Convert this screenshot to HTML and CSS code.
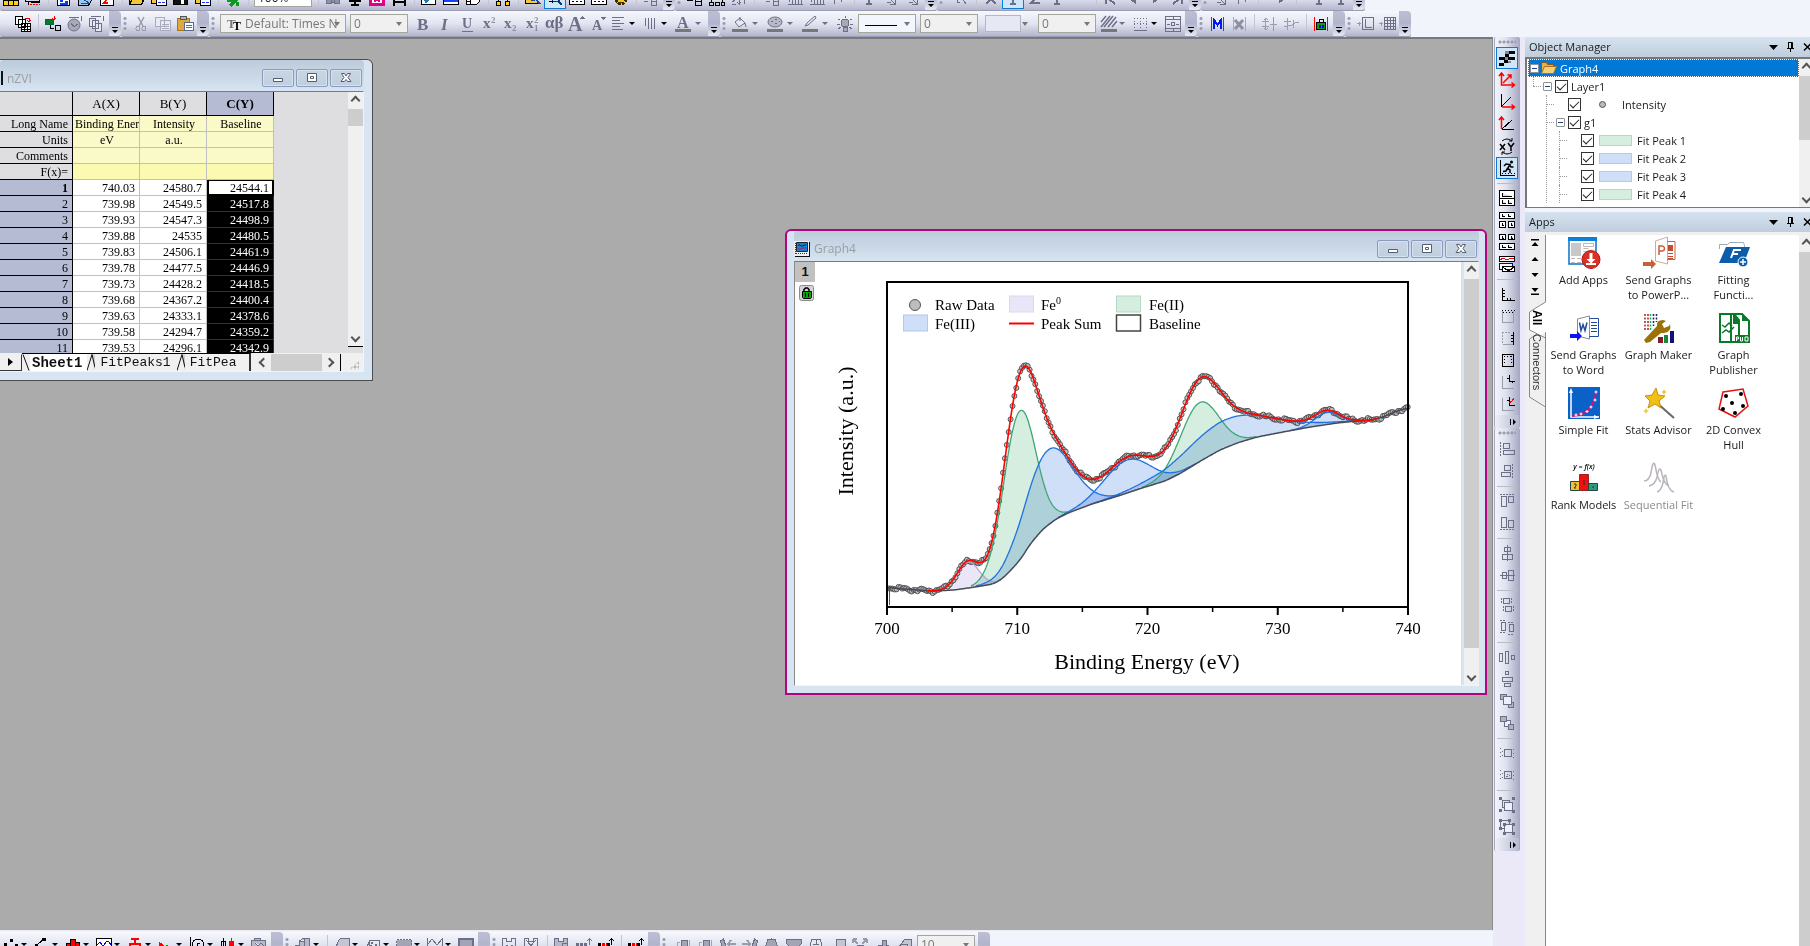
FILE: index.html
```html
<!DOCTYPE html>
<html lang="en">
<head>
<meta charset="utf-8">
<title>Graph4</title>
<link rel="stylesheet" href="styles.css">
</head>
<body>
<div class="app">
  <header class="bars">
    <div class="bar-row bar-row-first" id="bar-standard"></div>
    <div class="bar-row" id="bar-format"></div>
  </header>
  <div class="body">
    <div class="left">
      <main class="workspace">
        <section class="win win-book" aria-label="nZVI">
          <div class="titlebar">
            <span class="book-icon"></span>
            <span class="title">nZVI</span>
            <span class="win-buttons"></span>
          </div>
          <div class="client book-client">
            <div class="sheet-area">
              <div class="sheet-clip">
                <table class="sheet">
                  <thead><tr><th></th><th>A(X)</th><th>B(Y)</th><th class="picked">C(Y)</th></tr></thead>
                  <tbody id="sheet-body"></tbody>
                </table>
              </div>
              <div class="scroll scroll-book"><button class="sb up" aria-label="Scroll up"></button><span class="thumb"></span><button class="sb down" aria-label="Scroll down"></button></div>
            </div>
            <div class="tabs">
              <button class="tab-step" aria-label="Next sheet"></button>
              <div class="tab-list">
                <svg class="slash" viewBox="0 0 8 16"><path d="M1 0l6 16"/></svg><button class="tab tab-on">Sheet1</button><svg class="slash" viewBox="0 0 8 16"><path class="shade" d="M4 0l4 0 0 16z"/><path d="M0 16L5 0l3 13"/></svg><button class="tab">FitPeaks1</button><svg class="slash" viewBox="0 0 8 16"><path class="shade" d="M4 0l4 0 0 16z"/><path d="M0 16L5 0l3 13"/></svg><button class="tab">FitPea</button>
              </div>
              <div class="hscroll"><button class="sb prev" aria-label="Scroll left"></button><span class="thumb"></span><button class="sb next" aria-label="Scroll right"></button></div>
              <span class="grip-corner"></span>
            </div>
          </div>
        </section>

        <section class="win win-graph" aria-label="Graph4">
          <div class="titlebar">
            <svg class="graph-icon" viewBox="0 0 16 16"><path fill="#111" d="M1 1h15v15H1z"/><path fill="#eee" d="M0 0h15v15H0z"/><path fill="#0a84e0" stroke="#222" d="M2.500 1.500h11v9h-11z"/><path fill="none" stroke="#023" d="M4 4h2l1 1h2l1-1h2"/><path fill="none" stroke="#d11" d="M4 8h3l1-1h4"/><path stroke="#333" stroke-dasharray="1 1" d="M2 12.500h11M1.500 2v11"/></svg>
            <span class="title">Graph4</span>
            <span class="win-buttons"></span>
          </div>
          <div class="client graph-client">
            <div class="page">
              <svg class="chart" id="chart" viewBox="0 0 666 422" role="img" aria-label="Intensity against binding energy"></svg>
              <button class="layer">1</button>
              <svg class="lock" viewBox="0 0 16 16"><rect x=".5" y=".5" width="14" height="15" rx="2" fill="#d6d4d4" stroke="#8a8a8a"/><path fill="none" stroke="#000" stroke-width="1.500" d="M5 7V4.500L6.500 3h2L10 4.500V7"/><path fill="#0a0" stroke="#000" d="M3.500 6.500h9v6l-1 1h-7l-1-1z"/><path stroke="#000" d="M6.500 8v4M9.500 8v4"/></svg>
            </div>
            <div class="scroll scroll-graph"><button class="sb up" aria-label="Scroll up"></button><span class="thumb"></span><button class="sb down" aria-label="Scroll down"></button></div>
          </div>
        </section>
      </main>
      <footer class="bottom"><div class="bar-row" id="bar-plot"></div></footer>
    </div>

    <nav class="vbars" id="vbars" aria-label="Graph tools"></nav>

    <aside class="dock">
      <section class="panel">
        <h2 class="panel-head">Object Manager<span class="panel-tools"></span></h2>
        <div class="tree-box">
          <ul class="tree">
            <li><div class="row row-on"><span class="exp"></span><svg class="folder" viewBox="0 0 16 14"><path fill="#e8b04a" stroke="#8a5a14" d="M.5 12.500v-11h5l1 2h6v3"/><path fill="#f6cf7a" stroke="#a87320" d="M.5 12.500l3-7h12l-3 7z"/></svg><span>Graph4</span></div>
              <ul>
                <li class="tree-end"><div class="row"><span class="exp"></span><label><input type="checkbox" checked>Layer1</label></div>
                  <ul>
                    <li><div class="row leaf"><label><input type="checkbox" checked><i class="dot"></i>Intensity</label></div></li>
                    <li><div class="row"><span class="exp"></span><label><input type="checkbox" checked>g1</label></div>
                      <ul>
                        <li><div class="row leaf"><label><input type="checkbox" checked><i class="sw green"></i>Fit Peak 1</label></div></li>
                        <li><div class="row leaf"><label><input type="checkbox" checked><i class="sw blue"></i>Fit Peak 2</label></div></li>
                        <li><div class="row leaf"><label><input type="checkbox" checked><i class="sw blue"></i>Fit Peak 3</label></div></li>
                        <li><div class="row leaf"><label><input type="checkbox" checked><i class="sw green"></i>Fit Peak 4</label></div></li>
                      </ul>
                    </li>
                  </ul>
                </li>
              </ul>
            </li>
          </ul>
          <div class="scroll scroll-tree"><button class="sb up" aria-label="Scroll up"></button><span class="thumb"></span><button class="sb down" aria-label="Scroll down"></button></div>
        </div>
      </section>
      <section class="panel panel-apps">
        <h2 class="panel-head">Apps<span class="panel-tools"></span></h2>
        <div class="apps-box">
          <div class="side">
            <button class="step" aria-label="First"><svg viewBox="0 0 8 8"><path d="M0 0h8v1.500H0zM4 3l3.500 4h-7z"/></svg></button>
            <button class="step" aria-label="Previous"><svg viewBox="0 0 8 8"><path d="M4 2l3.500 4h-7z"/></svg></button>
            <button class="step" aria-label="Next"><svg viewBox="0 0 8 8"><path d="M4 6L.5 2h7z"/></svg></button>
            <button class="step" aria-label="Last"><svg viewBox="0 0 8 8"><path d="M0 6.500h8V8H0zM4 5L.5 1h7z"/></svg></button>
            <div class="side-tabs">
              <svg class="side-line" viewBox="0 0 18 112"><path fill="#fff" d="M18 3L1 13v18l8 7 9-5z"/><path fill="none" stroke="#888" d="M17.500 0v3L1.500 13v18l16 8M9 35l-7.500 5v58l16 10v4"/></svg>
              <button class="vtab vtab-on">All</button>
              <button class="vtab">Connectors</button>
            </div>
          </div>
          <div class="apps">
            <button class="appitem"><svg viewBox="0 0 32 32"><path fill="#fff" stroke="#0a70c8" stroke-width="1.500" d="M1 1h27v26H1z"/><path fill="#0a80d8" d="M0 0h29v4H0z"/><path fill="#c8c8c8" d="M3 6h10v13H3z"/><path fill="none" stroke="#bbb" d="M15.500 6.500h10v3h-10zM15.500 11.500h5M3 21.500h4M9 21.500h4M3 25.500h4M9 25.500h4M15.500 14.500h10"/><circle cx="23" cy="22.500" r="9" fill="#d93025" stroke="#b01818"/><path fill="#fff" d="M21.500 16h3v6h3L23 26.500 18.500 22h3zM18 26h10v2H18z"/></svg><span>Add Apps</span></button>
            <button class="appitem"><svg viewBox="0 0 32 32"><path fill="#fff" stroke="#d9a892" d="M12.500 4l12-4v27l-12-3z"/><path fill="none" stroke="#c8603a" d="M24 4.500h8v18h-8"/><path fill="#c84a2a" d="M25 8h5v6h-5zM25 16h5v1h-5zM25 19h5v1h-5zM25 21h5v1h-5z"/><path fill="none" stroke="#c8603a" stroke-width="1.500" d="M16 18V9h3.500q2 .5 2 2.500t-2 2.500H16"/><path fill="#c8603a" d="M0 25h8v-3l5 5-5 5v-3H0z"/></svg><span>Send Graphs to PowerP...</span></button>
            <button class="appitem"><svg viewBox="0 0 32 32"><path fill="#fff" stroke="#9ab" d="M1.500 12V7.500h8l2-2h14l1 3v4"/><path fill="#0b5cab" d="M8 10h24l-6 16H1z"/><path fill="none" stroke="#fff" stroke-width="2" d="M13 21l3-8h7M15 17h5"/><circle cx="25" cy="25" r="5" fill="#0b5cab" stroke="#fff"/><path stroke="#fff" stroke-width="1.500" d="M22 25h6M25 22v6"/></svg><span>Fitting<br>Functi...</span></button>
            <button class="appitem"><svg viewBox="0 0 32 32"><path fill="#fff" stroke="#889" d="M9.500 7l12-3v23l-12-3z"/><path fill="none" stroke="#234a9a" d="M21.500 6.500h9v18h-9M23 10.500h6M23 13.500h6M23 16.500h6M23 19.500h6"/><path fill="none" stroke="#234a9a" stroke-width="1.500" d="M11.500 10.500l1.500 8 2-6 2 6 2-8"/><path fill="#0a12f0" d="M2 22h7v-3l5 5-5 5v-3H2z"/></svg><span>Send Graphs to Word</span></button>
            <button class="appitem"><svg viewBox="0 0 32 32"><g fill="none" stroke-width="1.500" stroke-dasharray="2 1.500"><path stroke="#a22" d="M2 2v16M5 2v16"/><path stroke="#2a6" d="M7.500 2v16"/><path stroke="#226" d="M10.500 2v12M13.500 2v8"/></g><path fill="#9a7208" d="M14 14q-1-6 6-6l3 1-4 3 2 4 5-2 1-2q2 8-6 9h-3L7 30l-4 1-2-3z"/><path fill="#8a1a2a" d="M15 25h5v6h-5z"/><path fill="#1a8a3a" d="M21 23h4v8h-4z"/><path fill="#10107a" d="M27 19h4v12h-4z"/></svg><span>Graph Maker</span></button>
            <button class="appitem"><svg viewBox="0 0 32 32"><path fill="#fff" stroke="#0a7a2a" stroke-width="2" d="M13 2h11l7 7v21H13zM2 2h14l5 6v22H2z"/><path fill="#0a7a2a" d="M15 1l7 8v3h-7zM24 1l7 8h-7zM17 23h15v8H17z"/><path fill="none" stroke="#0a7a2a" stroke-width="1.500" d="M4 13l3 2 4-4 3 3M4 21l4-3 3 2 5-5"/><path fill="none" stroke="#fff" d="M18.500 29v-4h2v2h-2M22.500 25v4h2v-4M27 25v4h3v-4z"/></svg><span>Graph Publisher</span></button>
            <button class="appitem"><svg viewBox="0 0 32 32"><path fill="#0a62c8" d="M0 0h32v32H0z"/><path fill="none" stroke="#fff" stroke-width="1.500" d="M3 5v25h28"/><path fill="#fff" d="M3 1l2 5H1zM31 30l-5-2v4z"/><path fill="none" stroke="#d0107a" stroke-width="2" d="M4 29q12-1 17-7 6-7 7-17"/><path stroke="#fff" d="M6.500 28h3M8 26.500v3M11.500 27h3M13 25.500v3M17.500 24.500h3M19 23v3M21.500 20h3M23 18.500v3M25.500 13h3M27 11.500v3M26.500 5h3M28 3.500v3"/></svg><span>Simple Fit</span></button>
            <button class="appitem"><svg viewBox="0 0 32 32"><path stroke="#666" stroke-width="2" d="M14 16l17 15"/><path fill="#f2c014" stroke="#c8900a" d="M13 1l2 7 7 1-6 5 2 7-6-4-7 4 2-7-5-5 7-1z"/><path fill="#f2c840" d="M21 2l1 2 2 1-2 1-1 2-1-2-2-1 2-1zM3 21l1 2 2 1-2 1-1 2-1-2-2-1 2-1z"/></svg><span>Stats Advisor</span></button>
            <button class="appitem"><svg viewBox="0 0 32 32"><path fill="#fff" stroke="#e81010" stroke-width="1.500" d="M5 5l20-3 5 17-13 11L1 22z"/><g><circle cx="8" cy="9" r="2"/><circle cx="23" cy="7" r="2"/><circle cx="14" cy="16" r="2"/><circle cx="5" cy="22" r="2"/><circle cx="25" cy="19" r="2"/><circle cx="17" cy="26" r="2"/></g></svg><span>2D Convex Hull</span></button>
            <button class="appitem"><svg viewBox="0 0 32 32"><text x="16" y="7" text-anchor="middle" font-family="Open Sans, sans-serif" font-size="7" font-style="italic" font-weight="600">y = f(x)</text><path fill="#f2c030" stroke="#244" d="M2.500 19.500h9v9h-9z"/><path fill="#f01010" stroke="#922" d="M11.500 12.500h9v16h-9z"/><path fill="#2f9a78" stroke="#244" d="M20.500 21.500h9v7h-9z"/><path fill="none" stroke="#333" d="M6 22h2v2l-2 2h2M16 18v5M24 25h2"/></svg><span>Rank Models</span></button>
            <button class="appitem faded"><svg viewBox="0 0 32 32"><g fill="none" stroke="#b9b4be" stroke-width="1.500"><path d="M1 19q5 0 7-8 2-14 4-8 3 16 6 17"/><path d="M6 24q6-1 8-9 2-11 4-7 3 15 8 16"/><path d="M14 30q4-1 6-9 1-10 3-7 2 15 8 16"/></g></svg><span>Sequential Fit</span></button>
          </div>
          <div class="scroll scroll-apps"><button class="sb up" aria-label="Scroll up"></button><span class="thumb"></span></div>
        </div>
      </section>
    </aside>
  </div>
</div>
<script src="script.js"></script>
</body>
</html>
```
FILE: styles.css
```css
* { box-sizing: border-box; }
body { margin: 0; background: #f1f4fb; color: #1b1b1b; font: 11px/15px "Open Sans", "Noto Sans", sans-serif; overflow: hidden; }
button, select { font: inherit; color: inherit; border: 0; padding: 0; margin: 0; background: none; border-radius: 0; }
.app { height: 100vh; display: flex; flex-direction: column; }

/* toolbars */
.bars { flex: none; overflow: hidden; height: 37px; }
.bar-row { display: flex; height: 26px; }
.bar-row-first { margin-top: -15px; }
.group { display: flex; flex: none; align-items: center; height: 26px; background: linear-gradient(#f6f8fd, #e2e5f1 50%, #b4b6cc); border-bottom: 1px solid #9a9cb4; border-radius: 2px; }
.grip { flex: none; width: 9px; height: 16px; background: radial-gradient(circle, #9a9cb0 1px, transparent 2px) 0 0 / 8px 5px; }
.tb { flex: none; width: 22px; height: 22px; display: flex; align-items: center; padding-left: 3px; color: #6d6f86; }
.tb-drop { width: 35px; }
.tb-tight { width: 32px; }
.tb-small { width: 31px; }
.tb-on { background: #cfe5f8; box-shadow: inset 0 0 0 1px #0f7ad6; }
.icon { flex: none; width: 16px; height: 16px; overflow: visible; fill: none; stroke: currentColor; shape-rendering: crispEdges; }
.icon text { fill: currentColor; stroke: none; font-family: "Liberation Serif", serif; font-weight: 700; }
.caret { flex: none; margin-left: 4px; border: 3px solid transparent; border-top: 3px solid currentColor; border-bottom: 0; }
.tb-tight .caret, .tb-small .caret { margin-left: 2px; }
.black { color: #000; }
.sep { flex: none; width: 8px; height: 20px; background: linear-gradient(#c3c5d2, #c3c5d2) center / 1px 100% no-repeat; }
.space { flex: none; width: 4px; }
.cap { flex: none; align-self: stretch; width: 12px; margin-left: 1px; border-radius: 0 4px 4px 0; background: linear-gradient(#bcbfd4, #b2b4cc 50%, #e6e8f2); display: flex; align-items: flex-end; justify-content: center; padding-bottom: 3px; }
.cap svg, .vcap svg { width: 6px; height: 6px; }
.combo { flex: none; position: relative; width: 58px; height: 19px; margin: 0 2px; border: 1px solid #a5a69b; background: #f0f0f0; display: flex; color: #777; }
.combo select { appearance: none; width: 100%; padding-left: 3px; font-size: 12px; line-height: 17px; color: #777; }
.combo::after { content: ""; position: absolute; right: 5px; top: 7px; border: 3px solid transparent; border-top: 4px solid #777; border-bottom: 0; }
.combo svg { position: absolute; left: 6px; top: 1px; }
.combo-font { width: 126px; }
.combo-font select { padding-left: 24px; }
.combo-zoom { background: #fff; }
.combo-zoom select { color: #222; }
.combo-line { background: #f3f6fc; }
.combo-pen { width: 50px; background: none; border-color: transparent; margin-left: 4px; }
.combo-pen select { border: 1px solid #b5b7c4; width: 36px; background: #e6e9f3; }
.bottom { flex: none; height: 16px; overflow: hidden; border-top: 1px solid #e9eaf2; background: #f1f4fb; }
.bottom .bar-row { margin-top: 1px; }

.body { flex: 1; min-height: 0; display: flex; }
.left { flex: 1; min-width: 0; display: flex; flex-direction: column; }
.workspace { flex: 1; position: relative; overflow: hidden; background: #ababab; border-top: 2px solid #777a7c; border-right: 1px solid #8c8c8c; }

.vbars { flex: none; width: 32px; padding: 0 5px 0 1px; background: #ebe9f8; overflow: hidden; }
.vgroup { width: 26px; display: flex; flex-direction: column; align-items: center; background: linear-gradient(90deg, #f3f5fc, #dfe2ef 45%, #a9abc4); border: 1px solid #a7a9c0; border-width: 0 1px; border-radius: 2px; }
.vgroup .grip { width: 18px; height: 10px; background: radial-gradient(circle, #9a9cb0 1px, transparent 2px) 0 1px / 4px 8px; }
.vgroup .sep { width: 20px; height: 8px; background: linear-gradient(#b9bbc6, #b9bbc6) center / 100% 1px no-repeat; }
.vcap { align-self: stretch; height: 13px; background: linear-gradient(90deg, #eef0f8, #b6b9cf); display: flex; align-items: center; justify-content: flex-end; padding-right: 3px; border-radius: 0 0 4px 4px; }

/* child windows */
.win { position: absolute; background: #d7e4f2; border: 1px solid #4d4d4d; border-radius: 6px 6px 0 0; display: flex; flex-direction: column; }
.win-book { left: 0; top: 20px; width: 373px; height: 322px; border-left: 0; border-top-left-radius: 0; padding: 0 8px 8px 0; }
.win-graph { left: 785px; top: 190px; width: 702px; height: 466px; border: 2px solid #b0057f; padding: 0 6px 7px 7px; }
.titlebar { flex: none; height: 31px; display: flex; align-items: center; padding: 5px 2px 0 0; background: linear-gradient(#bccbda, #d7e4f2); color: #9a9ea3; font-size: 12px; border-radius: 4px 4px 0 0; }
.win-graph .titlebar { height: 30px; }
.title { flex: 1; padding-left: 4px; }
.book-icon { width: 3px; height: 14px; background: #bfe3e8; border-right: 2px solid #111; }
.graph-icon { width: 16px; height: 16px; }
.win-buttons { display: flex; gap: 2px; }
.win-buttons button { width: 32px; height: 18px; border: 1px solid #8b9bbd; border-radius: 2px; background: linear-gradient(#c9d5e3, #bfcfdf); box-shadow: inset 0 0 0 1px #d7e2ee; display: grid; place-items: center; }
.win-buttons svg { width: 12px; height: 10px; }
.client { flex: 1; min-height: 0; border: 1px solid #858585; border-color: #7b7b7b #f4f4f4 #f4f4f4 #8b8b8b; }
.book-client { display: flex; flex-direction: column; border-left: 0; background: #dedee1; }
.sheet-area { flex: 1; min-height: 0; display: flex; }
.sheet-clip { flex: 1; overflow: hidden; }
.sheet { table-layout: fixed; width: 274px; border-collapse: separate; border-spacing: 0; font: 12px/14px "Liberation Serif", serif; color: #000; }
.sheet th, .sheet td { height: 16px; padding: 1px 4px 0; overflow: hidden; white-space: nowrap; text-align: right; font-weight: 400; border: 0 solid #c0c0c0; border-width: 0 1px 1px 0; width: 67px; }
.sheet thead th { height: 24px; font-size: 13px; text-align: center; background: #dedee1; border-color: #000; }
.sheet thead th.picked { background: #b5bbd3; font-weight: 700; }
.sheet th:first-child { width: 73px; border-color: #000; background: #dedee1; }
.sheet td { background: #fff; }
.sheet .meta td { background: #fafac8; text-align: center; padding: 1px 0 0 2px; }
.sheet .meta-last td { background: #fafab0; }
.sheet .data th { background: #b5bbd3; }
.sheet .data-first th { font-weight: 700; }
.sheet .data td:last-child { background: #000; color: #fff; border-color: #333; border-left: 2px solid #000; }
.sheet .data-first td:last-child { background: #fff; color: #000; border-color: #000; box-shadow: inset 0 1px #000, inset 0 -1px #000, inset -1px 0 #000; }

.scroll { flex: none; width: 15px; display: flex; flex-direction: column; background: #f0f0f0; }
.thumb { background: #cdcdcd; }
.sb { flex: none; width: 15px; height: 17px; display: grid; place-items: center; }
.sb::before { content: ""; width: 5px; height: 5px; border: 2px solid #555; border-width: 2px 0 0 2px; transform: rotate(45deg); }
.sb.down::before { transform: rotate(225deg); }
.sb.prev::before { transform: rotate(-45deg); }
.sb.next::before { transform: rotate(135deg); }
.sb.down { margin-top: auto; }
.scroll-book { border-bottom: 1px solid #000; height: calc(100% - 6px); }
.scroll-book .thumb { height: 17px; }
.tabs { flex: none; height: 18px; display: flex; align-items: center; background: #f0f0f0; font: 13px/16px "Liberation Mono", monospace; color: #111; }
.tab-step { flex: none; width: 22px; height: 17px; border: 1px solid #333; border-left: 0; border-top-color: #eee; display: grid; place-items: center; }
.tab-step::before { content: ""; border: 4px solid transparent; border-left: 5px solid #000; border-right: 0; }
.tab-list { width: 229px; height: 18px; flex: none; white-space: nowrap; display: flex; border-top: 1px solid #000; border-right: 2px solid #333; }
.tab { flex: none; padding: 0 6px 0 5px; }
.tab-on { background: #fff; font-size: 14px; font-weight: 700; padding: 0 5px 0 2px; }
.slash { flex: none; width: 8px; height: 17px; fill: none; stroke: #111; stroke-width: 1; }
.slash .shade { fill: #cfcfcf; stroke: none; }
.hscroll { width: 90px; height: 17px; display: flex; padding: 0 3px 0 5px; border-right: 1px solid #000; }
.hscroll .thumb { flex: 1; }
.grip-corner { flex: 1; height: 9px; background: radial-gradient(circle, #b5b5b5 1px, transparent 2px) 0 0 / 4px 4px; margin: 6px 4px 0 8px; clip-path: polygon(100% 0, 100% 100%, 0 100%); }
.graph-client { display: flex; }
.page { flex: 1; position: relative; background: #fff; border-right: 1px solid #ddd; margin-right: 2px; }
.chart { display: block; width: 666px; height: 422px; }
.chart text { font-family: "Liberation Serif", serif; fill: #000; }
.layer { position: absolute; left: 0; top: 0; width: 20px; height: 20px; background: #c3c0c0; font: 700 13px/20px "Liberation Sans", sans-serif; color: #111; }
.lock { position: absolute; left: 4px; top: 23px; width: 16px; height: 16px; }
.scroll-graph .thumb { height: 369px; }

/* docked panels */
.dock { flex: none; width: 285px; display: flex; flex-direction: column; gap: 4px; }
.panel { flex: none; display: flex; flex-direction: column; }
.panel-apps { flex: 1; min-height: 0; }
.panel-head { margin: 0; height: 20px; display: flex; justify-content: space-between; align-items: center; padding: 0 0 1px 4px; background: linear-gradient(#d6e2ee, #bfcddd); font-size: 11px; font-weight: 400; }
.panel-tools { width: 43px; display: flex; overflow: hidden; }
.panel-tools svg { flex: none; width: 45px; height: 12px; }
.tree-box { display: flex; height: 151px; border: 2px solid #777; border-width: 2px 0 1px 2px; background: #fff; padding-left: 1px; overflow: hidden; }
.tree { flex: 1; overflow: hidden; }
.tree, .tree ul { list-style: none; margin: 0; padding: 0; }
.tree ul { margin-left: 13px; }
.tree ul li { position: relative; }
.tree ul li::before { content: ""; position: absolute; left: -8px; top: 0; bottom: 0; border-left: 1px dotted #999; }
.tree ul .tree-end::before { bottom: auto; height: 9px; }
.tree ul li::after { content: ""; position: absolute; left: -8px; top: 9px; width: 8px; border-top: 1px dotted #999; }
.row { height: 18px; display: flex; align-items: center; gap: 3px; padding-left: 2px; white-space: nowrap; }
.row label { display: flex; align-items: center; gap: 3px; }
.leaf { padding-left: 14px; }
.row-on { background: #0078d7; color: #fff; outline: 1px dotted #fff; outline-offset: -1px; }
.exp { width: 9px; height: 9px; border: 1px solid #919191; background: linear-gradient(#22408a, #22408a) center / 5px 1px no-repeat #fff; border-radius: 1px; }
.folder { width: 16px; height: 14px; margin-left: -1px; }
input[type="checkbox"] { appearance: none; width: 13px; height: 13px; margin: 0; border: 1px solid #333; background: #fff; display: grid; place-items: center; }
input[type="checkbox"]::after { content: ""; width: 8px; height: 4px; margin-top: -2px; border: 1px solid #222; border-width: 0 0 1px 1px; transform: rotate(-45deg); }
.dot { width: 7px; height: 7px; margin: 0 13px 0 15px; border: 1px solid #555; border-radius: 50%; background: #bbb; }
.sw { width: 33px; height: 11px; margin: 0 2px; border: 1px solid #b4d9c5; }
.green { background: #d5eee0; }
.blue { background: #cfdff8; border-color: #b1caee; }
.scroll-tree .thumb { height: 64px; }
.scroll-tree, .scroll-apps { width: 11px; overflow: hidden; }
.apps-box { flex: 1; min-height: 0; display: flex; padding-top: 3px; background: #f0f0f0; }
.side { width: 20px; flex: none; display: flex; flex-direction: column; align-items: center; }
.step { width: 20px; height: 16px; display: grid; place-items: center; }
.step svg { width: 8px; height: 8px; }
.side-tabs { position: relative; width: 17px; display: flex; flex-direction: column; align-items: center; margin-left: 3px; padding-top: 11px; gap: 9px; }
.side-line { position: absolute; left: 0; top: 0; width: 18px; height: 112px; }
.vtab { position: relative; writing-mode: vertical-rl; font: 11px/13px "Liberation Sans", sans-serif; color: #333; }
.vtab-on { font-weight: 700; font-size: 12px; color: #000; }
.apps { flex: 1; display: grid; grid-template-columns: repeat(auto-fill, 75px); grid-auto-rows: 75px; justify-content: start; align-content: start; background: #fff; border-left: 1px solid #888; padding-top: 2px; overflow: hidden; }
.appitem { display: flex; flex-direction: column; align-items: center; gap: 3px; text-align: center; }
.appitem svg { width: 32px; height: 32px; overflow: visible; }
.appitem span { width: 77px; margin: 0 -1px; padding: 0 1px; }
.faded { color: #8b8b8b; }
.scroll-apps .thumb { flex: 1; }
```
FILE: script.js
```js
const G = {
  table: '<path fill="#f7d117" stroke="#000" d="M.5.5h15v15H.5zM.5 5.500h15M.5 10.500h15M5.500.5v15M10.500.5v15"/>',
  board: '<path stroke="#000" d="M.5 2.500h14v9H.5zM3.500 12v3M6 12.500h9"/><path stroke="#f00" stroke-dasharray="2 1" d="M5 14.500h10"/>',
  doc: '<path fill="#fff" stroke="#000" d="M2.500.5h12v15h-12z"/><path stroke="#0a3cf0" stroke-width="2" d="M5 4h7M5 11h3M10 12h3M5 14h8"/>',
  docB: '<path fill="#9cc8f0" stroke="#000" d="M1.500 1.500h13v9l-3 5h-10z"/><path stroke="#24a" d="M4 8l8 5M4 13h8"/>',
  docR: '<path fill="#fff" stroke="#000" d="M1.500.5h13v15h-13z"/><path stroke="#f00" stroke-width="2" d="M4 14l8-10M4 13h5"/>',
  folder: '<path fill="#f3c63c" stroke="#000" d="M.5 14.500v-9h6l1 2h6v3M.5 14.500l3-6h12l-3 6z"/>',
  docs: '<path fill="#f3c63c" stroke="#000" d="M.5.500h9v13h-9z"/><path fill="#fff" stroke="#000" d="M5.500 4.500h10v11h-10z"/><path stroke="#13f" stroke-dasharray="3 1" d="M7 12.500h7"/>',
  save: '<path fill="#111" stroke="#000" d="M.5.500h14v14H.5z"/><path fill="#f3c63c" d="M4 2h8v5H4z"/><path fill="#fff" stroke="none" d="M8 10h3v4H8z"/>',
  run: '<path stroke="#0a9a20" stroke-width="3" d="M2 10h5l2 2 4-3M9 12l-4 4M12 12v4"/>',
  bino: '<path fill="#8d93a8" d="M1.500 7.500h5v6h-5zM9.500 7.500h5v6h-5zM6.500 9.500h3v3h-3z"/>',
  tool: '<path stroke="#000" stroke-width="2" d="M2 11h12M8 4v11M4 15h8"/>',
  pink: '<path fill="#fff" stroke="#e0008a" stroke-width="3" d="M1.500 1.500h13v13h-13z"/><path stroke="#e0008a" stroke-width="2" d="M5 12l3-3 3 3"/>',
  film: '<path stroke="#000" stroke-width="2" d="M2.500 0v16M13.500 0v16M2 6h12M2 12h12"/>',
  pen: '<path fill="#fff" stroke="#000" d="M.5.500h14v14H.5z"/><path stroke="#27a" stroke-width="3" d="M4 12L13 4"/>',
  pane: '<path fill="#fff" stroke="#000" d="M.5.500h15v14H.5z"/><path stroke="#14f" stroke-width="4" d="M1 10h14"/>',
  box: '<path fill="#fff" stroke="#000" d="M1.500 2.500h13v9l-3 3h-10zM5 10v4M1 11h4"/>',
  tree: '<path fill="#f5d020" stroke="#000" d="M1.500 11.500h4v4h-4zM10.500 11.500h4v4h-4zM6 6.500h4v3H6zM3 11l3-3M13 11l-3-3"/>',
  findf: '<path fill="#f3c63c" stroke="#000" d="M.5 5.500h12v8H.5z"/><path stroke="#124a9a" stroke-width="2" d="M10 8l5 6M6 10h4"/>',
  find: '<path stroke="#000" d="M2 9h5M2 11.500h3M5 7v6"/><circle cx="9" cy="8" r="4" fill="#bfe8fa" stroke="#137"/><path stroke="#137" stroke-width="2" d="M11 11l4 4"/>',
  cmd: '<path fill="#fff" stroke="#000" d="M.5 2.500h15v12H.5z"/><path stroke="#000" stroke-dasharray="2 2" d="M3 11.500h10"/>',
  gear: '<circle cx="8" cy="9" r="5" fill="#f5c518" stroke="#3a2a00" stroke-dasharray="3 1" stroke-width="3"/>',
  colsG: '<path d="M1 5.500h4M1 8.500h4M1 11.500h4M8.500 2v13h5V2M8.500 7h5M8.500 11h5"/>',
  cols: '<path stroke="#000" d="M.5 4v6h5V4M8.500 2v13h6V2M8.500 7h6M8.500 11h6"/>',
  net: '<path stroke="#000" d="M8 4v5M2.500 12V9.500h11V12M.5 12.500h4v3h-4zM6.500 12.500h4v3h-4zM12.500 12.500h3v3h-3z"/>',
  sort: '<path d="M1 14h4M1 12l3-2M8 6v8l-2-2M8 14l2-2M13.500 8v6"/>',
  bars: '<path d="M.5 14.500h15M2.500 12V8M5.500 14V9M8.500 14V7M11.500 14V5M14 14V4"/>',
  tee: '<path d="M3.500 4v10M8 6h5M10.500 6v6"/>',
  arr: '<path d="M4 6l8 8M12 9v5H7M4 12h4"/>',
  letter: '<path stroke-width="2" d="M8 2v12M5 14h6"/>',
  lamb: '<path d="M4 4v8h3M9 4v4l4 6"/>',
  cross: '<path stroke-width="2" d="M8 4v5l-5 5M8 9l5 5"/>',
  zed: '<path stroke-width="2" d="M12 5l-8 8h9"/>',
  first: '<path stroke-width="2" d="M3 4v10M12 4L6 9l6 5"/>',
  left: '<path fill="currentColor" d="M10 5L5 9l5 4z"/>',
  right: '<path fill="currentColor" d="M6 5l5 4-5 4z"/>',
  last: '<path stroke-width="2" d="M13 4v10M4 4l6 5-6 5"/>',
  stack: '<path fill="#fff" stroke="#000" d="M.5.500h7v8h-7zM3.500 3.500h7v8h-7zM6.500 7.500h9v8h-9zM6.500 10.500h9M6.500 13h9M9.500 8v7M12.500 8v7"/><path stroke="#e00" d="M10 2.500h4V6M12 4l2 2 2-2"/>',
  link: '<path fill="#0a7a2a" stroke="#064" d="M.5 3.500h8v5h-8z"/><path stroke="#000" d="M5 9v3h4M10.500 9.500h5v5h-5z"/><path stroke="#e00" d="M9 0v4M7 2l2 2 2-2"/>',
  clock: '<circle cx="7" cy="9" r="6" fill="#a7a9b8" shape-rendering="auto"/><path d="M4 7l3 4 4-3M2 1h10M14.500 0v5"/>',
  sheets: '<path fill="#e8eaf3" d="M.5 2.500h6v8h-6zM3.500 4.500h6v8h-6zM6.500 7.500h6v8h-6zM2 .5h10M14.500 0v5"/>',
  cut: '<path stroke="#9a9cae" shape-rendering="auto" stroke-width="1.500" d="M5 1l5 9M11 1L6 10"/><circle cx="5" cy="12.500" r="2" stroke="#9a9cae"/><circle cx="11" cy="12.500" r="2" stroke="#9a9cae"/>',
  copy: '<path fill="#e7e9f3" stroke="#a9abbc" d="M.5 1.500h9v9h-9zM5.500 4.500h10v10h-10zM7 8h7M7 10.500h7M7 12.500h7"/>',
  paste: '<path fill="#e0a93e" stroke="#a8741a" d="M.5 2.500h12v12H.5z"/><path fill="#b5b5b5" stroke="#555" d="M3.500.5h6v3h-6z"/><path fill="#fff" stroke="#5a6a8a" d="M7.500 6.500h9v8h-9zM9 9h6M9 11.500h6"/>',
  B: '<text x="4" y="14" font-size="17">B</text>',
  I: '<text x="6" y="14" font-size="17" font-style="italic">I</text>',
  U: '<text x="5" y="12" font-size="14">U</text><path d="M5 15.500h11"/>',
  sup: '<text x="4" y="12" font-size="15">x</text><text x="12" y="7" font-size="9" opacity=".7">2</text>',
  sub: '<text x="3" y="12" font-size="15">x</text><text x="11" y="15" font-size="9" opacity=".7">2</text>',
  supsub: '<text x="3" y="12" font-size="15">x</text><text x="11" y="7" font-size="9" opacity=".7">2</text><text x="11" y="15" font-size="9" opacity=".7">1</text>',
  ab: '<text x="0" y="12" font-size="17">αβ</text>',
  Aup: '<text x="1" y="15" font-size="20">A</text><path fill="currentColor" d="M13.500 2.500l2-2 2 2z"/>',
  Adn: '<text x="3" y="14" font-size="14">A</text><path fill="currentColor" d="M12.500 1.500h4l-2 2z"/>',
  align: '<path d="M1 1.500h12M1 4.500h8M1 7.500h12M1 10.500h8M1 13.500h11"/>',
  vert: '<path d="M2.500 2v8M5.500 2v11M8.500 2v11M11.500 2v11"/>',
  Acol: '<text x="2" y="12" font-size="16">A</text><path stroke="#777" stroke-width="3" d="M0 14.500h16"/>',
  fill: '<path shape-rendering="auto" fill="#e7e9f3" d="M3 6l5-4 5 5-6 4zM8 5V1M13 7l1 4"/><path stroke="#777" stroke-width="3" d="M0 14.500h16"/>',
  pal: '<ellipse shape-rendering="auto" cx="8" cy="6" rx="7" ry="5" fill="#b7b9c8"/><path d="M4 5h2M8 3h2M8 7h2M12 5h1"/><path stroke="#777" stroke-width="3" d="M0 14.500h16"/>',
  pencil: '<path shape-rendering="auto" fill="#e7e9f3" d="M3 10l2-3 8-7 1 2-8 7z"/><path stroke="#777" stroke-width="3" d="M0 14.500h16"/>',
  bulb: '<circle cx="8" cy="7" r="4" fill="#a7a9b8"/><path fill="#a7a9b8" d="M6 11h4v4H6zM8 0v2M1 3l2 1M15 3l-2 1M0 8h3M13 8h3M1 13l3-2M15 13l-3-2"/>',
  hatch: '<path shape-rendering="auto" stroke-width="1.500" d="M0 6l5-6M0 11L9 0M3 11l9-11M7 11l8-10M11 11l5-6"/><path stroke="#777" stroke-width="3" d="M0 14.500h16"/>',
  dots: '<path stroke-dasharray="1 2" d="M1 2.500h13M1 7.500h13M1.500 2v11M7.500 2v11M13.500 2v11"/><path d="M1 14.500h13"/>',
  grid3: '<path d="M.5.500h15v15H.5zM.5 3.500h15M.5 12.500h15M8 0v4M8 12v4M2 8h3M11 8h3M6.500 6.500h3v3h-3z"/>',
  Mm: '<path stroke="#f00" d="M2.500 1v14M14.500 1v14"/><path stroke="#0018e8" stroke-width="2" d="M5 13V4l3.500 5L12 4v9"/>',
  Xm: '<path stroke="#a7a9b8" d="M2.500 1v14M14.500 1v14"/><path stroke="#8d8fa2" shape-rendering="auto" stroke-width="3" d="M4 4l8 9M12 4l-8 9"/>',
  al1: '<path stroke="#9a9cae" d="M4.500 2v12M12.500 1v14M1 5.500h7M1 10.500h7M9 8.500h7M3 4l2-2 2 2M3 12l2 2 2-2"/>',
  al2: '<path stroke="#9a9cae" d="M4.500 2v12M1 5.500h7M1 11l4-1 4-1 3-2 4-1M10.500 4v8"/>',
  lk: '<path stroke="#f00" d="M1.500 1v14M14.500 1v14"/><path stroke="#000" d="M6.500 6V3.500h4V6"/><path fill="#0a9a20" stroke="#000" d="M3.500 6.500h9v7h-9z"/><path stroke="#00f" stroke-width="2" d="M6.500 9v3M9.500 9v3"/>',
  addL: '<path stroke="#9a9cae" d="M0 7.500h4M2 5.500v4"/><path d="M5.500 1.500h11v12h-11zM8.500 3v8H15"/>',
  addG: '<path stroke="#9a9cae" d="M0 7.500h4M2 5.500v4"/><path d="M5.500 1.500h11v12h-11zM5.500 4.500h11M5.500 7.500h11M5.500 10.500h11M8.500 1v12M11.500 1v12M14.500 1v12"/>',
  pts: '<path stroke="#000" stroke-width="3" d="M1 7h3M7 3h3M12 8h3"/>',
  ln: '<path stroke="#000" d="M3 8l7-6"/><path stroke="#000" stroke-width="3" d="M1 8h3M8 2.500h4"/>',
  colr: '<path fill="#f00" stroke="#000" d="M1.500 6.500h4v9h-4zM5.500 2.500h5v13h-5zM10.500 5.500h4v10h-4z"/>',
  wave: '<path fill="#fff" stroke="#000" d="M.5 1.500h15v14H.5z"/><path stroke="#00f" d="M1 8l3-3 3 4 4-5 2 1 2 3"/>',
  err: '<path stroke="#f00" stroke-width="1.500" d="M4 2h8M8 2v4M3 7h10v3H3z"/>',
  mount: '<path fill="#f00" stroke="#f00" d="M1 14V5l6 5z"/><path fill="#090" stroke="#090" d="M6 12l3-4 4 4z"/>',
  dial: '<circle cx="9" cy="8" r="6" stroke="#000"/><path stroke="#000" d="M1.500 0v16M8 11V6h3"/>',
  candle: '<path stroke="#000" d="M3.500 1v15M1.500 4.500h4v8h-4z"/><path fill="#f00" stroke="#f00" d="M9.500 4.500h4v8h-4zM11.500 1v15"/>',
  snap: '<path fill="#b7b9c8" d="M.5 3.500h14v10H.5zM3 3V1h6v2M4 6l3 3 3-3 3 3"/>',
  b3: '<path fill="#b7b9c8" d="M.5 14V8h4V4h5V1h5v13zM4.500 8v6M9.500 4v10M4.500 4l4-3h6"/>',
  surf: '<path fill="#c3c5d2" d="M1 12l4-9 2-2h8v12z"/>',
  cube: '<path d="M1 12l4-9h9v9zM5 3l-1 6"/><path stroke-width="2" d="M6 6h2M10 8h2M5 9h2"/>',
  fldm: '<path fill="#a3a5b6" stroke-dasharray="2 1" d="M.5 2.500h15v12H.5z"/>',
  wv2: '<path d="M.5 1v15M1 7l4-5 5 6 5-6M1 11.500h15M15.500 1v15"/>',
  img: '<path fill="#a3a5b6" stroke-width="2" d="M1 2h14v13H1z"/>',
  face: '<path d="M.5 1.500h4v3h5v-3h4v14H.5zM4 8h2M9 8h2M4 10.500h6"/>',
  facex: '<path d="M.5 1.500h4v3h5v-3h4v14H.5zM2 3l10 11M12 3L2 14"/>',
  facel: '<path fill="#b7b9c8" d="M.5 1.500h4v3h5v-3h4v14H.5zM8 6h5v9H8z"/>',
  flg: '<path stroke-width="3" stroke-dasharray="3 1" d="M0 7.500h12"/><path d="M13.500 2v6M11 4l2.500-2.500L16 4"/>',
  flr: '<path stroke="#f00" stroke-width="3" stroke-dasharray="3 1" d="M4 7.500h8"/><path stroke="#000" stroke-width="3" d="M0 7.500h3M9 7.500h3"/><path stroke="#000" d="M13.500 2v6M11 4l2.500-2.500L16 4"/>',
  rotl: '<path fill="#a3a5b6" d="M5.500 3.500h6v12h-6z"/><path stroke="#a3a5b6" d="M1 15V5h3M13 3v12"/>',
  shl: '<path fill="#a3a5b6" d="M.5 4l3-2 4 12h-4z"/><path stroke="#9a9cae" stroke-width="2" d="M8 7h8M11 3L8 7l3 4"/>',
  shr: '<path fill="#a3a5b6" d="M15.500 4l-3-2-4 12h4z"/><path stroke="#9a9cae" stroke-width="2" d="M8 7H0M5 3l3 4-3 4"/>',
  bell: '<path fill="#a3a5b6" d="M1.500 15V10l2-7 4-1 4 1 2 7v5z"/>',
  trap: '<path fill="#a3a5b6" d="M.5 2.500h15v4l-3 3h-9l-3-3z"/>',
  trap2: '<path d="M4 2h8l3 10H1zM5 7h6M8 2v5"/>',
  step: '<path fill="#c3c5d2" d="M.5 14v-5h6V2.500h9V14z"/>',
  ex: '<path stroke="#9a9cae" stroke-width="2" d="M1 2h4M1 2v4M2 3l4 4M15 2h-4M15 2v4M14 3l-4 4"/><path d="M5.500 8.500h6v6h-6z"/>',
  pile: '<path fill="#a3a5b6" d="M1 12l4-4h3V3h4v5l3 1v5H1z"/>',
  pile2: '<path fill="#c3c5d2" d="M1 12l5-6 3-4h6v12H1z"/><path d="M5 7h6v7"/>',
  skew: '<path fill="#000" stroke="none" d="M10 1h6v3h-6zM6 4h4v3H6zM0 7h6v3H0zM9 7h7v3H9zM5 10h4v3H5zM0 13h5v3H0z"/><path fill="#888" stroke="none" d="M6 1h4v3H6zM6 7h3v3H6zM9 11h3v2H9z"/>',
  ax3: '<path stroke="#f00" stroke-width="1.500" shape-rendering="auto" d="M2.500 2v11H15M0 4l2.500-3L5 4M12.500 10.500L15.500 13l-3 2.500M4 11l8-8M8.500 3H12v3.500"/>',
  axx: '<path stroke="#000" d="M2.500 0v12.500L12 3"/><path stroke="#f00" stroke-width="1.500" shape-rendering="auto" d="M3 13h12M12.500 10.500L15.500 13l-3 2.500"/>',
  axy: '<path stroke="#000" d="M3 13.500h12M3 13l10-9"/><path stroke="#f00" stroke-width="1.500" shape-rendering="auto" d="M2.500 2v11M0 4l2.500-3L5 4"/>',
  xy: '<g shape-rendering="auto" stroke="#000"><path stroke-width="1.500" d="M1 6l5 6M6 6l-5 6M9 5l3 4 3-4M12 9v4"/><path d="M3 3q5-4 10 0M13 0v3h-3M13 14q-5 4-10 0M3 17v-3h3"/></g>',
  runner: '<path stroke="#000" d="M1.500 0v15.500H16"/><path stroke="#000" stroke-dasharray="1 2" d="M3 13.500h13"/><circle cx="12.500" cy="2" r="1.500" fill="#000" stroke="none" shape-rendering="auto"/><path stroke="#000" stroke-width="1.500" shape-rendering="auto" d="M5 6l2-2 4 .5-2.500 4L11 10v3M8.500 8.500L7 11l-3 .5M10.500 5l1.500 2h2.500"/>',
  one: '<path stroke="#000" fill="#fff" d="M.5.500h15v15H.5zM3.500 3v3H13M.5 8.500h15M3.500 10v3h3M9.500 10v3h3"/>',
  four: '<path stroke="#000" fill="#fff" d="M.5.500h15v6H.5zM.5 9.500h6v6h-6zM9.500 9.500h6v6h-6zM3.500 2v2h2M9.500 2v2h2M3 11v2h2M12 11v2h2"/>',
  quad: '<path stroke="#000" fill="#fff" d="M.5.500h6v5h-6zM9.500.500h6v5h-6zM.5 9.500h15v6H.5zM3 2v2h2M12 2v2h2M3.500 11v2h3M9.500 11v2h3"/>',
  wenv: '<path stroke="#000" fill="#fff" d="M.5.500h15v5H.5z"/><path stroke="#f00" d="M1 4l3-2 4 2 4-2 3 1"/><path stroke="#00c" fill="#fff" d="M.5 7.500h13v6H.5z"/><path stroke="#000" fill="#fff" d="M3.500 10.500h12v5h-12zM3.500 11l6 4 6-4"/>',
  axL: '<path stroke="#000" d="M3.500 2v12.500H16M4 4.500h2M4 7.500h2M4 10.500h2M8.500 12v2M11.500 12v2"/>',
  axT: '<path stroke="#9a9cae" d="M3.500 3v11.500h11V3"/><path stroke="#000" stroke-dasharray="1 2" d="M3 2.500h13M4 4.500h11"/>',
  axR: '<path stroke="#9a9cae" stroke-dasharray="2 1" d="M3.500 2v12M3 2.500h9"/><path stroke="#000" d="M14.500 2v13M12 5.500h2M12 8.500h2M12 11.500h2"/><path stroke="#9a9cae" d="M4 14.500h10"/>',
  axA: '<path stroke="#000" d="M3.500 2.500h11v12h-11z"/><path stroke="#000" stroke-dasharray="1 2" d="M5 4.500h9M5.500 4v9M12.500 4v9"/>',
  axI: '<path stroke="#9a9cae" d="M3.500 2v12.500H15"/><path stroke="#000" d="M10.500 1v6h5M8 4.500h2M13.500 8v1"/>',
  axJ: '<path stroke="#9a9cae" d="M3.500 2v12.500H15"/><path stroke="#000" d="M10.500 1v8h5M8 4.500h2"/><path stroke="#f00" d="M10 7l3-2 2-3"/>',
  v1: '<path stroke-dasharray="2 1" d="M1.500 1v14"/><path d="M4.500 2.500h6v5h-6zM4.500 9.500h11v4h-11z"/>',
  v2: '<path stroke-dasharray="2 1" d="M13.500 1v14"/><path d="M5.500 2.500h6v5h-6zM2.500 9.500h9v4h-9z"/>',
  v3: '<path stroke-dasharray="2 1" d="M1 1.500h14"/><path d="M2.500 3.500h5v10h-5zM9.500 3.500h5v6h-5z"/>',
  v4: '<path stroke-dasharray="2 1" d="M1 14.500h14"/><path d="M2.500 2.500h5v10h-5zM9.500 5.500h5v7h-5z"/>',
  v5: '<path d="M5.500 2.500h6v4h-6zM3.500 9.500h10v5h-10zM8.500 0v16"/>',
  v6: '<path d="M3.500 5.500h4v6h-4zM9.500 3.500h5v10h-5zM1 8.500h15"/>',
  v7: '<path stroke-dasharray="2 1" d="M2.500 1v6M12.500 1v6M4.500 9v6M14.500 9v6"/><path d="M4.500 1.500h6v5h-6zM6.500 9.500h6v5h-6z"/>',
  v8: '<path stroke-dasharray="2 1" d="M1 1.500h6M1 13.500h6M9 3.500h6M9 15.500h6"/><path d="M2.500 3.500h4v8h-4zM10.500 5.500h4v7h-4z"/>',
  v9: '<path d="M.5 4.500h3v8h-3zM6.500 2.500h3v12h-3zM12.500 6.500h3v4h-3z"/>',
  v10: '<path d="M6.500.5h3v3h-3zM3.500 6.500h10v4h-10zM5.500 12.500h6v3h-6z"/>',
  v11: '<path fill="#b0b2c4" d="M1.500 1.500h6v5h-6zM9.500 9.500h5v5h-5z"/><path fill="#eef" d="M4.500 3.500h8v8h-8z"/>',
  v12: '<path fill="#eef" d="M5.500 5.500h6v6h-6z"/><path fill="#b0b2c4" d="M1.500 1.500h6v5h-6zM9.500 9.500h5v5h-5z"/>',
  v13: '<path d="M5.500 4.500h7v7h-7z"/><path stroke-dasharray="1 3" d="M1.500 3v11M3.500 6v8M14.500 4v10"/>',
  v14: '<path d="M5.500 4.500h7v7h-7zM8 7h1M10 8h1M7 9h2"/><path stroke-dasharray="1 3" d="M1.500 3v11M3.500 6v8M14.500 4v10"/>',
  v15: '<path d="M3.500 3.500h7v7h-7z"/><path fill="#eef" d="M5.500 5.500h8v8h-8z"/><path fill="currentColor" d="M.5.500h2v2h-2zM13.500.500h2v2h-2zM.5 12.500h2v2h-2zM13.500 13.500h2v2h-2z"/>',
  v16: '<path d="M1.500 1.500h9v8h-9z"/><path fill="#eef" d="M5.500 5.500h8v8h-8z"/><path fill="currentColor" d="M.5.500h2v2h-2zM9.500.500h2v2h-2zM.5 8.500h2v2h-2zM4.500 4.500h2v2h-2zM13.500 4.500h2v2h-2zM4.500 13.500h2v2h-2zM13.500 13.500h2v2h-2z"/>'
};

const CAP = '<svg viewBox="0 0 6 6"><path d="M0 0h6v1H0zM0 3h6L3 6z"/></svg>';
const VCAP = '<svg viewBox="0 0 6 6"><path d="M0 0h1v6H0zM3 0v6L6 3z"/></svg>';
const COMBOS = {
  zoom: ['combo-zoom', 'Zoom', '100%'], font: ['combo-font', 'Font', 'Default: Times N'],
  size: ['', 'Size', '0'], line: ['combo-line', 'Line style', ''], width: ['', 'Width', '0'],
  pen: ['combo-pen', 'Pattern', ''], gap: ['', 'Gap', '0'], scale: ['', 'Scale', '10']
};
const icon = n => `<svg class="icon" viewBox="0 0 16 16">${G[n]}</svg>`;

function item(token) {
  if (token === '|') return '<span class="sep"></span>';
  if (token === '_') return '<span class="space"></span>';
  if (token[0] === '$') {
    const [cls, label, text] = COMBOS[token.slice(1)];
    const deco = token === '$font'
      ? '<svg class="icon" viewBox="0 0 16 16"><text x="0" y="12" font-size="13" fill="#777">T</text><text x="6" y="14" font-size="12" style="fill:#000">T</text></svg>'
      : token === '$line' ? '<svg width="34" height="16"><path stroke="#000" d="M0 9.500h32"/></svg>' : '';
    return `<span class="combo ${cls}">${deco}<select aria-label="${label}"><option>${text}</option></select></span>`;
  }
  const [, name, flags] = token.match(/^(\w+)(\W*)$/);
  const cls = ['tb'];
  if (flags.includes('+')) cls.push('tb-drop');
  if (flags.includes('~')) cls.push('tb-tight');
  if (flags.includes('-')) cls.push('tb-small');
  if (flags.includes('*')) cls.push('tb-on');
  const caret = /[+~-]/.test(flags) ? `<i class="caret${flags.includes('!') ? ' black' : ''}"></i>` : '';
  return `<button class="${cls.join(' ')}" aria-label="${name}">${icon(name)}${caret}</button>`;
}
const bar = (list, grip = true) =>
  `<div class="group">${grip ? '<span class="grip"></span>' : ''}${list.split(' ').map(item).join('')}<span class="cap">${CAP}</span></div>`;
const vbar = list =>
  `<div class="vgroup"><span class="grip"></span>${list.split(' ').map(item).join('')}<span class="vcap">${VCAP}</span></div>`;
const put = (id, html) => { document.getElementById(id).innerHTML = html; };

put('bar-standard',
  bar('table board | doc docB docR | folder docs save docs | run | $zoom | bino tool pink film | pen pane box | tree | findf find* cmd cmd gear | colsG', false) +
  bar('cols net sort | _ colsG bars bars tee | letter arr arr') +
  bar('_ lamb | cross letter* zed letter _ _ _ _ _ _ | first left right last') +
  bar('arr tee | _ _ right | _ _ letter letter'));
put('bar-format',
  bar('_ _ _ stack | link clock sheets', false) +
  bar('cut copy paste') +
  bar('$font $size B I U sup sub supsub ab Aup Adn align~! vert~! Acol+') +
  bar('fill+ pal+ pencil+ bulb $line $width $pen $gap hatch~ dots~! grid3') +
  bar('Mm Xm | al1 al2 | lk') +
  bar('addL addG'));
put('bar-plot',
  bar('pts-! ln-! colr-! wave-! err-! mount-! dial-! candle-! snap', false) +
  bar('b3-! | surf-! cube-! fldm-! wv2-! img') +
  bar('face facex | facel flg flr | flr') +
  bar('_ rotl rotl shl shr bell trap trap2 step ex pile pile2 $scale'));
put('vbars',
  vbar('skew* ax3 axx axy xy runner* | one four quad wenv | axL axT axR axA axI axJ') +
  vbar('v1 v2 | v3 v4 | v5 v6 | v7 v8 | v9 v10 v11 v12 | v13 v14 | v15 v16'));

const winIcons = [
  ['Minimize', '<path d="M1.500 5.500h9v3h-9z"/>'],
  ['Restore', '<path d="M1.500.5h9v8h-9z"/><path d="M4.500 3.500h3v2h-3z"/>'],
  ['Close', '<path d="M1.500.5h3L6 3 7.500.5h3L8 4.500l3 4H7.500L6 6.500 4.500 8.500H1l3-4z"/>']
];
document.querySelectorAll('.win-buttons').forEach(el => {
  el.innerHTML = winIcons.map(([l, p]) => `<button aria-label="${l}"><svg viewBox="0 0 12 10" fill="#fff" stroke="#555d70">${p}</svg></button>`).join('');
});
document.querySelectorAll('.panel-tools').forEach(el => {
  el.innerHTML = `<svg viewBox="0 0 45 12"><path d="M2 4h9L6.500 9z"/><path fill="none" stroke="#000" d="M20 7.500h7M21.500 1.500h4v6M21.500 1v6M23.500 8v3"/><path stroke="#000" d="M24.500 2v5"/><path fill="none" stroke="#000" stroke-width="1.500" d="M37 2.500l7 7M44 2.500l-7 7"/></svg>`;
});

const meta = [['Long Name', 'Binding Ener', 'Intensity', 'Baseline'], ['Units', 'eV', 'a.u.', ''], ['Comments', '', '', ''], ['F(x)=', '', '', '']];
const data = [
  ['740.03', '24580.7', '24544.1'], ['739.98', '24549.5', '24517.8'], ['739.93', '24547.3', '24498.9'],
  ['739.88', '24535', '24480.5'], ['739.83', '24506.1', '24461.9'], ['739.78', '24477.5', '24446.9'],
  ['739.73', '24428.2', '24418.5'], ['739.68', '24367.2', '24400.4'], ['739.63', '24333.1', '24378.6'],
  ['739.58', '24294.7', '24359.2'], ['739.53', '24296.1', '24342.9']
];
const tr = (cls, head, cells) => `<tr class="${cls}"><th>${head}</th>${cells.map(c => `<td>${c}</td>`).join('')}</tr>`;
put('sheet-body',
  meta.map((r, i) => tr(i === 3 ? 'meta meta-last' : 'meta', r[0], r.slice(1))).join('') +
  data.map((r, i) => tr(i ? 'data' : 'data data-first', i + 1, r)).join(''));

/* Spectrum: gaussian components standing on a stepped baseline */
const W = 521, H = 325;
const knots = [[0, 305.500], [29, 308], [45, 309], [67, 308], [88, 305], [106, 302], [115, 297], [124, 288], [133, 278], [144, 261], [156, 247], [169, 237], [181, 231], [205, 222], [228, 215], [255, 206], [278, 199], [294, 191], [316, 177.5], [333, 168], [350, 161], [370, 155], [396, 150], [423, 145], [450, 141], [470, 139], [483, 138.5], [496, 135], [510, 129], [521, 126]];
const raw = x => {
  const i = Math.max(1, knots.findIndex(k => k[0] >= x));
  const [a, b] = [knots[i - 1], knots[i]];
  return a[1] + (b[1] - a[1]) * (x - a[0]) / (b[0] - a[0]);
};
const base = x => {
  let s = 0;
  for (let d = -4; d <= 4; d++) s += raw(Math.min(W, Math.max(0, x + d)));
  return s / 9;
};
const peaks = [
  { c: 81, h: 26, s: 11, fill: '#ebe6f7', line: '#b0a4cc' },
  { c: 132, h: 149, s: 16, fill: '#d5eee0', line: '#3fa776' },
  { c: 161, h: 75, s: 24, fill: '#cfdff8', line: '#1f72e0' },
  { c: 240, h: 33, s: 23, fill: '#cfdff8', line: '#1f72e0' },
  { c: 312, h: 59, s: 19, fill: '#d5eee0', line: '#3fa776' },
  { c: 338, h: 28, s: 45, fill: '#cfdff8', line: '#1f72e0' },
  { c: 440, h: 12, s: 12, fill: '#cfdff8', line: '#1f72e0' }
];
const bump = (p, x) => p.h * Math.exp(-((x - p.c) ** 2) / (2 * p.s * p.s));
const total = x => base(x) - peaks.reduce((t, p) => t + bump(p, x), 0);
const path = (f, a, b) => {
  const out = [];
  for (let x = a; x <= b; x++) out.push(`${x} ${f(x).toFixed(1)}`);
  return 'M' + out.join('L');
};
let fills = '', lines = '', dots = '';
peaks.forEach(p => {
  const a = Math.max(0, Math.round(p.c - 3 * p.s)), b = Math.min(W, Math.round(p.c + 3 * p.s));
  const d = path(x => base(x) - bump(p, x), a, b);
  const back = [];
  for (let x = b; x >= a; x--) back.push(`${x} ${base(x).toFixed(1)}`);
  fills += `<path d="${d}L${back.join('L')}Z" fill="${p.fill}" style="mix-blend-mode:multiply"/>`;
  lines += `<path d="${d}" fill="none" stroke="${p.line}" stroke-width="1.300"/>`;
});
for (let x = 2; x <= W; x += 1.9) {
  const n = 1.2 * Math.sin(x * .31) + .8 * Math.sin(x * .83 + 1) + .4 * Math.sin(x * 2.1);
  dots += `<circle cx="${x.toFixed(1)}" cy="${(total(x) + n).toFixed(1)}" r="2.500"/>`;
}
let ticks = '';
for (let i = 0; i <= 8; i++) {
  const x = i * W / 8;
  ticks += `<path d="M${x} ${H}v${i % 2 ? 5 : 8}" stroke="#000" stroke-width="${i % 2 ? 1.5 : 2}"/>`;
  if (i % 2 === 0) ticks += `<text x="${x}" y="${H + 27}" font-size="17" text-anchor="middle">${700 + i * 5}</text>`;
}
const sw = (x, y, fill, line, w = 1) => `<rect x="${x}" y="${y}" width="24" height="16" fill="${fill}" stroke="${line}" stroke-width="${w}"/>`;
const label = (x, y, t) => `<text x="${x}" y="${y}" font-size="15">${t}</text>`;
put('chart', `<g transform="translate(92 20)">
  <g style="isolation:isolate">${fills}</g>
  <g fill="#c0c0c0" fill-opacity=".8" stroke="#444" stroke-width=".9">${dots}</g>
  ${lines}
  <path d="${path(base, 0, W)}" fill="none" stroke="#454a58" stroke-width="1.500"/>
  <path d="${path(total, 40, 490)}" fill="none" stroke="#f00" stroke-width="1.600"/>
  <path d="M2.500 306v17" stroke="#556" stroke-width="1"/>
  <rect width="${W}" height="${H}" fill="none" stroke="#000" stroke-width="2"/>
  ${ticks}
  <text x="260" y="387" font-size="22" text-anchor="middle">Binding Energy (eV)</text>
  <text transform="translate(-34 149) rotate(-90)" font-size="22" text-anchor="middle">Intensity (a.u.)</text>
  <circle cx="28" cy="23" r="5.500" fill="#bdbdbd" stroke="#555"/>
  ${sw(16.5, 33, '#cfdff8', '#b1caee')}${sw(122.5, 14, '#ebe6f7', '#dcd8ee')}${sw(229.5, 14, '#d5eee0', '#b4d9c5')}${sw(229.5, 33, '#fff', '#444', 1.5)}
  <path d="M122 41.500h25" stroke="#f00" stroke-width="2"/>
  ${label(48, 28, 'Raw Data')}${label(48, 47, 'Fe(III)')}${label(154, 28, 'Fe<tspan font-size="10" dy="-6">0</tspan>')}${label(154, 47, 'Peak Sum')}${label(262, 28, 'Fe(II)')}${label(262, 47, 'Baseline')}
</g>`);
```
